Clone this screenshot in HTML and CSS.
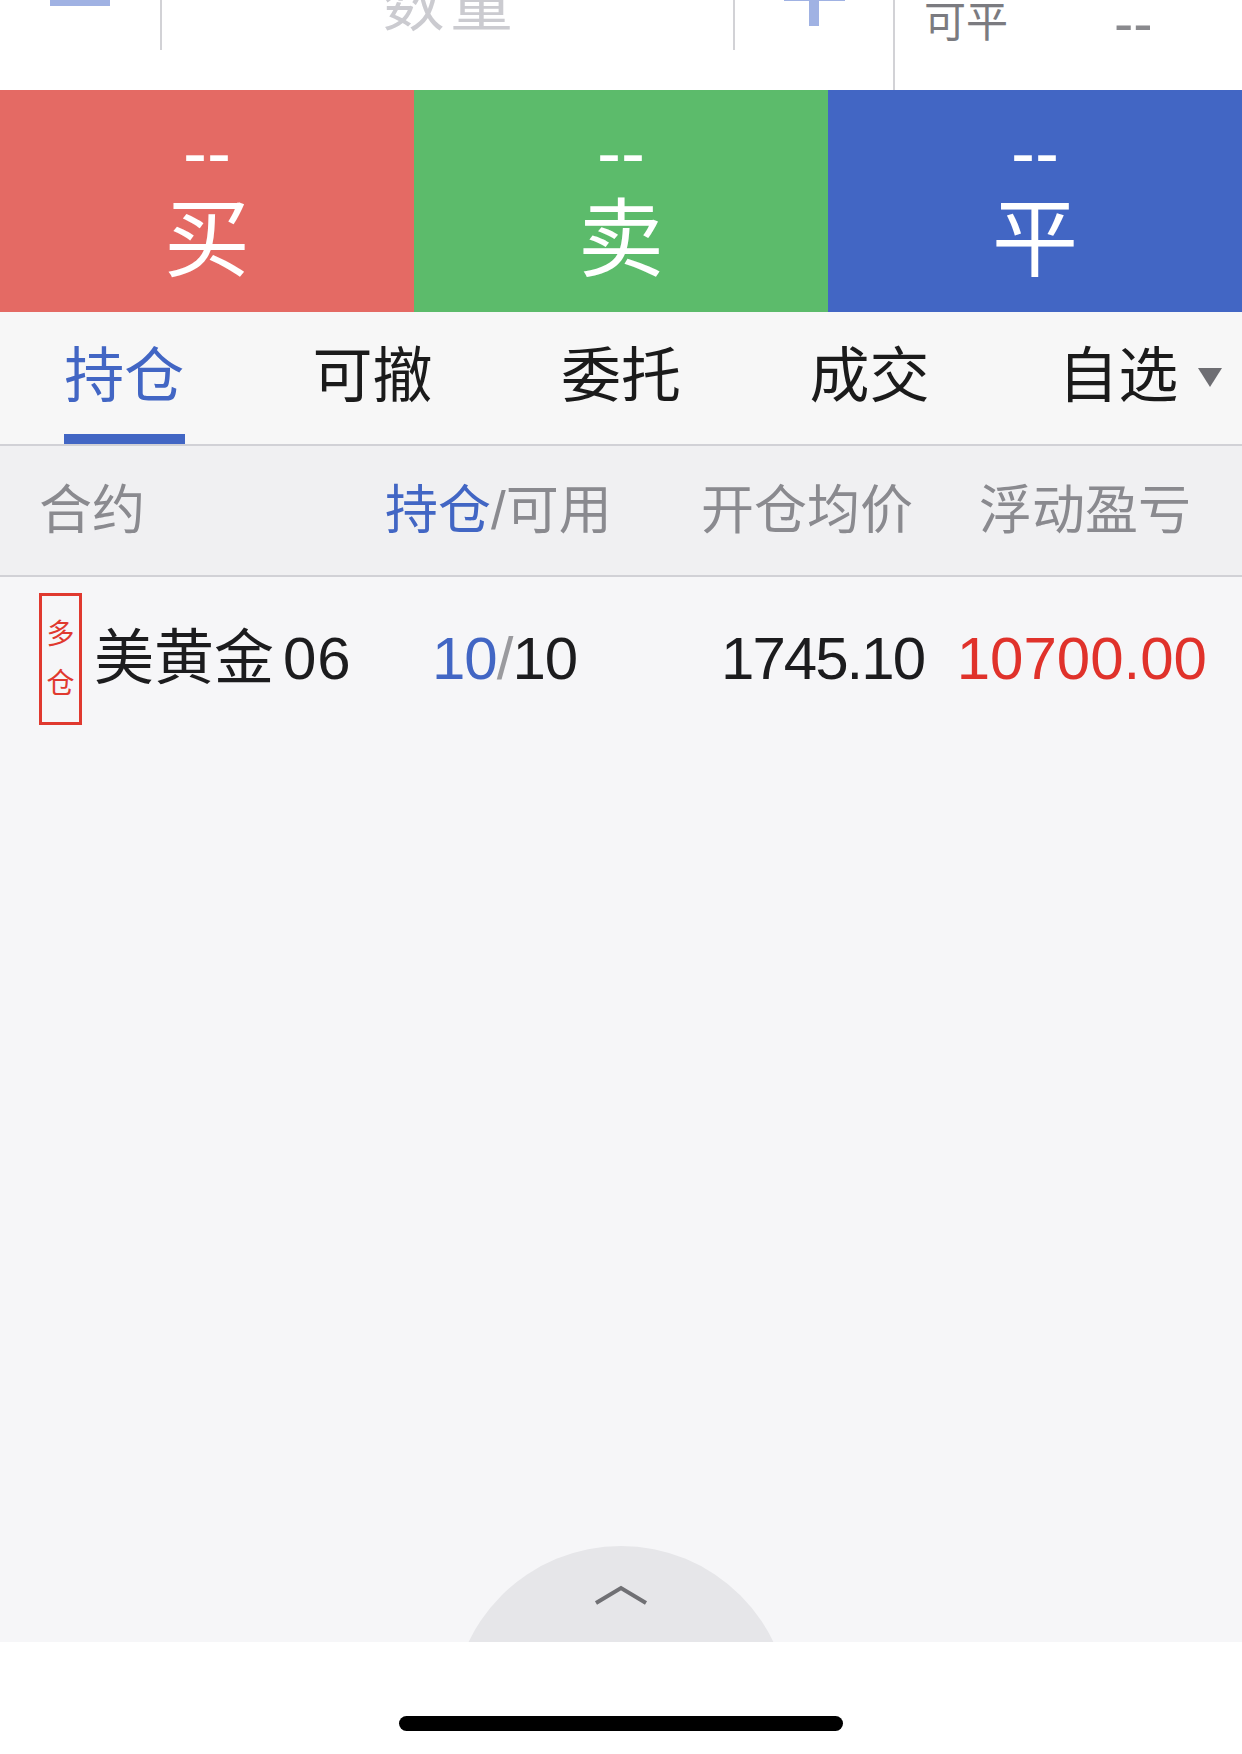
FILE: index.html
```html
<!DOCTYPE html>
<html lang="zh-CN">
<head>
<meta charset="utf-8">
<title>持仓</title>
<link rel="stylesheet" href="styles.css">
</head>
<body>
<div class="app">
  <div class="order-bar">
    <div class="stepper">
      <div class="step-btn"><span class="minus"></span></div>
      <div class="qty"><span class="qty-ph">数量</span></div>
      <div class="step-btn"><span class="plus"></span></div>
    </div>
    <div class="avail">
      <span class="avail-label">可平</span>
      <span class="avail-val">--</span>
    </div>
  </div>

  <div class="actions">
    <div class="act buy"><span class="act-price">--</span><span class="act-label">买</span></div>
    <div class="act sell"><span class="act-price">--</span><span class="act-label">卖</span></div>
    <div class="act close"><span class="act-price">--</span><span class="act-label">平</span></div>
  </div>

  <nav class="tabs">
    <div class="tab active"><span class="tab-text">持仓</span><span class="tab-ind"></span></div>
    <div class="tab"><span class="tab-text">可撤</span></div>
    <div class="tab"><span class="tab-text">委托</span></div>
    <div class="tab"><span class="tab-text">成交</span></div>
    <div class="tab"><span class="tab-text">自选<span class="caret"></span></span></div>
  </nav>

  <div class="thead">
    <span>合约</span>
    <span><span class="hl">持仓</span>/可用</span>
    <span>开仓均价</span>
    <span>浮动盈亏</span>
  </div>

  <div class="tbody">
    <div class="row">
      <div class="tag"><span>多</span><span>仓</span></div>
      <div class="c-name">美黄金<span class="code">06</span></div>
      <div class="c-pos"><span class="blue">10</span><span class="slash">/</span>10</div>
      <div class="c-price">1745.10</div>
      <div class="c-pnl">10700.00</div>
    </div>
    <div class="pull">
      <svg class="chev" width="56" height="22" viewBox="0 0 56 22"><polyline points="3,19 28,4 53,19" fill="none" stroke="#707074" stroke-width="4" stroke-linecap="butt" stroke-linejoin="miter"/></svg>
    </div>
  </div>

  <div class="home"><span class="home-bar"></span></div>
</div>
</body>
</html>
```

FILE: styles.css
```css
html, body {
  margin: 0;
  padding: 0;
}
body {
  font-family: "Liberation Sans", "Noto Sans CJK SC", sans-serif;
  background: #ffffff;
  color: #1c1c1e;
}
.app {
  width: 1242px;
  height: 1754px;
  display: flex;
  flex-direction: column;
  overflow: hidden;
}

/* top order bar (scrolled, partially cut) */
.order-bar {
  height: 90px;
  flex-shrink: 0;
  display: flex;
  background: #ffffff;
  overflow: hidden;
}
.stepper {
  width: 893px;
  height: 50px;
  display: flex;
  align-items: flex-start;
}
.step-btn {
  width: 160px;
  display: flex;
  justify-content: center;
  align-items: flex-start;
}
.step-btn:last-child {
  width: 158px;
}
.minus {
  width: 60px;
  height: 10px;
  margin-top: -4px;
  background: #a0b2e3;
}
.plus {
  width: 61px;
  height: 61px;
  margin-top: -35px;
  background:
    linear-gradient(#a0b2e3, #a0b2e3) center / 10px 100% no-repeat,
    linear-gradient(#a0b2e3, #a0b2e3) center / 100% 10px no-repeat;
}
.qty {
  flex: 1;
  height: 50px;
  border-left: 2px solid #d2d2d6;
  border-right: 2px solid #d2d2d6;
  display: flex;
  justify-content: center;
  align-items: flex-start;
}
.qty-ph {
  font-size: 62px;
  line-height: 62px;
  margin-top: -26px;
  letter-spacing: 6px;
  margin-right: -6px;
  color: #cbcbd0;
}
.avail {
  flex: 1;
  border-left: 2px solid #d2d2d6;
  display: flex;
  align-items: flex-start;
  padding-left: 29px;
  padding-top: 1px;
}
.avail-label {
  font-size: 42px;
  line-height: 44px;
  color: #7b7b80;
  width: 190px;
}
.avail-val {
  font-size: 58px;
  line-height: 44px;
  color: #8a8a8e;
}

/* buy / sell / close */
.actions {
  height: 222px;
  flex-shrink: 0;
  display: grid;
  grid-template-columns: repeat(3, 1fr);
}
.act {
  display: flex;
  flex-direction: column;
  align-items: center;
  padding-top: 30px;
  color: #ffffff;
}
.buy { background: #e46a64; }
.sell { background: #5cbb6b; }
.close { background: #4266c4; }
.act-price {
  font-size: 72px;
  line-height: 64px;
}
.act-label {
  font-size: 86px;
  line-height: 86px;
  margin-top: 13px;
}

/* tabs */
.tabs {
  height: 132px;
  flex-shrink: 0;
  display: grid;
  grid-template-columns: repeat(5, 1fr);
  background: #f7f7f7;
  border-bottom: 2px solid #d1d1d6;
}
.tab {
  display: flex;
  flex-direction: column;
  align-items: center;
  padding-top: 35px;
}
.tab-text {
  display: inline-flex;
  align-items: center;
  font-size: 60px;
  line-height: 60px;
  color: #1b1b1b;
}
.tab.active .tab-text {
  color: #4266c4;
}
.tab-ind {
  margin-top: auto;
  width: 121px;
  height: 10px;
  background: #4266c4;
}
.caret {
  display: inline-block;
  width: 0;
  height: 0;
  border-left: 12.5px solid transparent;
  border-right: 12.5px solid transparent;
  border-top: 19px solid #6e6e73;
  margin-left: 20px;
  margin-right: -45px;
}

/* table header */
.thead {
  height: 129px;
  flex-shrink: 0;
  display: grid;
  grid-template-columns: 346px 316px 278px 1fr;
  align-items: center;
  padding-left: 39px;
  background: #f0f0f2;
  border-bottom: 2px solid #d1d1d6;
  font-size: 53px;
  line-height: 53px;
  color: #8a8a8f;
}
.hl {
  color: #4266c4;
}

/* table body */
.tbody {
  height: 1065px;
  flex-shrink: 0;
  display: flex;
  flex-direction: column;
  background: #f6f6f8;
  overflow: hidden;
}
.row {
  display: flex;
  align-items: center;
  padding: 16px 0 0 39px;
  font-size: 60px;
  line-height: 60px;
  color: #1c1c1e;
}
.tag {
  width: 43px;
  height: 132px;
  box-sizing: border-box;
  border: 3px solid #e0392f;
  display: flex;
  flex-direction: column;
  align-items: center;
  justify-content: center;
  gap: 21px;
  font-size: 28px;
  line-height: 28px;
  color: #e0392f;
}
.c-name {
  margin-left: 12px;
  width: 338px;
  white-space: nowrap;
}
.code {
  margin-left: 9px;
  letter-spacing: 1px;
}
.c-pos {
  width: 200px;
  letter-spacing: -1px;
}
.blue {
  color: #4266c4;
}
.slash {
  color: #9a9a9e;
}
.c-price {
  width: 292px;
  text-align: right;
  letter-spacing: -2px;
}
.c-pnl {
  width: 283px;
  text-align: right;
  color: #e0322b;
}
.pull {
  margin-top: auto;
  margin-bottom: -242px;
  align-self: center;
  flex-shrink: 0;
  width: 338px;
  height: 338px;
  box-sizing: border-box;
  padding-top: 38px;
  border-radius: 50%;
  background: #e6e6e9;
  display: flex;
  justify-content: center;
  align-items: flex-start;
}
.chev {
  display: block;
}

/* home indicator */
.home {
  flex: 1;
  background: #ffffff;
  display: flex;
  justify-content: center;
  align-items: flex-start;
}
.home-bar {
  margin-top: 74px;
  width: 444px;
  height: 15px;
  border-radius: 8px;
  background: #000000;
}
```
